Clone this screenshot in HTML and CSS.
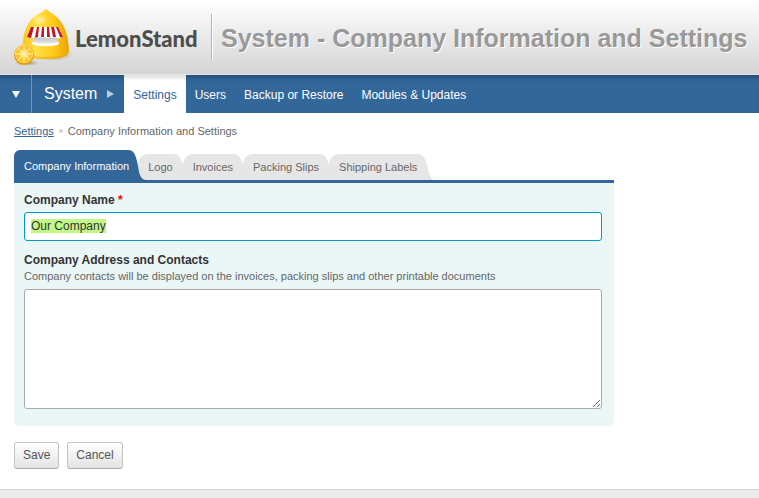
FILE: index.html
```html
<!DOCTYPE html>
<html lang="en">
<head>
<meta charset="utf-8">
<title>System - Company Information and Settings</title>
<link rel="stylesheet" href="styles.css">
</head>
<body>
<header class="header">
  <a class="brand" href="#">
    <svg class="brand-icon" viewBox="0 0 62 60" aria-hidden="true">
      <defs>
        <linearGradient id="lemon" x1="0" x2="1"><stop offset="0" stop-color="#fcc61a"/><stop offset=".3" stop-color="#ffe044"/><stop offset=".65" stop-color="#ffcb1b"/><stop offset="1" stop-color="#e9a304"/></linearGradient>
        <linearGradient id="window" x1="0" y1="0" x2="0" y2="1"><stop offset="0" stop-color="#b4b4b4"/><stop offset="1" stop-color="#f4f4f4"/></linearGradient>
        <radialGradient id="shade"><stop offset="0" stop-color="#8a7a3a" stop-opacity=".9"/><stop offset="1" stop-color="#a9a58a" stop-opacity="0"/></radialGradient>
        <radialGradient id="glow"><stop offset="0" stop-color="#fff6b8" stop-opacity=".8"/><stop offset="1" stop-color="#fff6b8" stop-opacity="0"/></radialGradient>
        <radialGradient id="slice"><stop offset="0" stop-color="#fff0a0"/><stop offset="1" stop-color="#ffb70f"/></radialGradient>
      </defs>
      <ellipse cx="40" cy="48" rx="22" ry="6" fill="url(#shade)"/>
      <ellipse cx="15" cy="56" rx="13" ry="3" fill="url(#shade)"/>
      <path d="M34 2c2 1 3 3 7 5 9 6 14 17 15 27 1 7 2 12-1 14-4 3-13 4-21 4s-17-1-21-4c-3-3-3-8-2-14C12 23 17 12 26 7c5-2 6-4 8-5z" fill="url(#lemon)"/>
      <ellipse cx="28" cy="13" rx="8" ry="6" fill="url(#glow)"/>
      <path d="M12 47c8 4 35 4 43 0-1 4-12 5-21 5s-20-1-22-5z" fill="#e9a000" opacity=".5"/>
      <path d="M21 28h25v8q1 2-1 2-11 2-23 0-2 0-1-2z" fill="url(#window)"/>
      <path d="M20 35c7 2 20 2 27 0v2c-7 3-20 3-27 0z" fill="#fff"/>
      <path d="M19 20h27l5 10q-2 2-4 1-2 1-4-1-2 2-5 0-2 2-5 0-2 2-5 0-2 2-5 0-2 2-4 1-2 1-4-1z" fill="#fff"/>
      <path d="M19 20h3l-3 11q-2 0-4-1zM25 20h2l-1 10q-2 1-3 0zM30 20h2v10h-3zM35 20h2l1 10h-3zM39 20h3l2 10h-3zM44 20h2l5 10q-2 1-3 0z" fill="#c41622"/>
      <circle cx="12" cy="48" r="10" fill="#eb9d08"/>
      <circle cx="12" cy="47" r="9" fill="#ffe87a"/>
      <circle cx="12" cy="47" r="8" fill="url(#slice)"/>
      <path d="M12 39v16M4 47h16M6 41l12 12M18 41L6 53" stroke="#fff2ae" stroke-width="1"/>
    </svg>
    <span class="brand-name">LemonStand</span>
  </a>
  <h1 class="page-title">System - Company Information and Settings</h1>
</header>
<nav class="nav">
  <button class="nav-toggle" type="button" aria-label="Menu"><svg viewBox="0 0 8 7" width="8" height="7"><path d="M0 0h8L4 7z" fill="#fff"/></svg></button>
  <a class="nav-section" href="#">System <svg viewBox="0 0 7 8" width="7" height="8"><path d="M0 0l7 4-7 4z" fill="#b9cce0"/></svg></a>
  <a class="nav-link nav-link-active" href="#">Settings</a>
  <a class="nav-link" href="#">Users</a>
  <a class="nav-link" href="#">Backup or Restore</a>
  <a class="nav-link" href="#">Modules &amp; Updates</a>
</nav>
<main class="content">
  <div class="crumbs"><a href="#">Settings</a><span class="dot"></span><span>Company Information and Settings</span></div>
  <form class="form">
    <div class="tabs">
      <a class="tab tab-active" href="#">Company Information<svg class="cap" viewBox="0 0 18 30"><path d="M0 0C6 0 7 4 9 11 11 20 11 30 18 30H0z"/></svg></a>
      <a class="tab" href="#">Logo<svg class="cap" viewBox="0 0 18 26"><path d="M0 0C6 0 8 4 10 11 12 19 13 26 18 26H0z"/></svg></a>
      <a class="tab" href="#">Invoices<svg class="cap" viewBox="0 0 18 26"><path d="M0 0C6 0 8 4 10 11 12 19 13 26 18 26H0z"/></svg></a>
      <a class="tab" href="#">Packing Slips<svg class="cap" viewBox="0 0 18 26"><path d="M0 0C6 0 8 4 10 11 12 19 13 26 18 26H0z"/></svg></a>
      <a class="tab" href="#">Shipping Labels<svg class="cap" viewBox="0 0 18 26"><path d="M0 0C6 0 8 4 10 11 12 19 13 26 18 26H0z"/></svg></a>
    </div>
    <div class="panel">
      <label class="label" for="name">Company Name <span class="required">*</span></label>
      <input class="field" id="name" type="text" value="Our Company">
      <label class="label label-next" for="address">Company Address and Contacts</label>
      <p class="hint" id="hint">Company contacts will be displayed on the invoices, packing slips and other printable documents</p>
      <textarea class="field area" id="address" aria-describedby="hint"></textarea>
    </div>
    <div class="actions">
      <button class="button" type="button">Save</button>
      <button class="button" type="button">Cancel</button>
    </div>
  </form>
</main>
<footer class="footer"></footer>
<script src="script.js"></script>
</body>
</html>
```
FILE: styles.css
```css
* { box-sizing: border-box; }

body {
  margin: 0;
  min-height: 100vh;
  display: flex;
  flex-direction: column;
  background: #fff;
  color: #666;
  font: 11px/14px "Liberation Sans", Arial, sans-serif;
}

a { color: inherit; text-decoration: none; }

.header {
  display: flex;
  align-items: center;
  height: 75px;
  padding-left: 12px;
  border-bottom: 1px solid #e6e6e6;
  background: linear-gradient(#fff, #d4d4d4);
}

.brand {
  display: flex;
  align-items: center;
  gap: 1px;
  width: 199px;
  flex: none;
}

.brand-icon { flex: none; width: 62px; height: 60px; }

.brand-name {
  padding-top: 3px;
  color: #4d4d4d;
  font: 900 22px/26px Lato, "Open Sans", sans-serif;
}

.page-title {
  margin: 0;
  padding: 2px 0 0 9px;
  border-left: 1px solid #b4b4b4;
  box-shadow: inset 1px 0 #fff;
  color: #999;
  font-size: 25px;
  line-height: 45px;
  white-space: nowrap;
  text-shadow: 1px 1px #fff;
}

.nav {
  display: flex;
  height: 38px;
  background: #336699;
  box-shadow: inset 0 6px 5px -4px #234a70;
  color: #fff;
  font-size: 12px;
  line-height: 40px;
}

.nav-toggle {
  width: 32px;
  padding: 0;
  border: 0;
  border-right: 1px solid #7094b8;
  background: none;
  line-height: 0;
}

.nav-section {
  display: flex;
  align-items: center;
  gap: 10px;
  padding: 0 10px 0 12px;
  font-size: 16px;
}

.nav-link { padding: 0 9px; }

.nav-link-active {
  background: linear-gradient(#ddd, #fff 6px);
  color: #336699;
}

.content { flex: 1; padding: 11px 14px 20px; }

.crumbs { display: flex; align-items: center; }
.crumbs a { color: #336699; text-decoration: underline; }

.dot {
  width: 4px;
  height: 4px;
  margin: 0 5px;
  border-radius: 2px;
  background: #d4d4d4;
}

.form { max-width: 600px; margin-top: 12px; }

.tabs {
  display: flex;
  align-items: flex-end;
  height: 33px;
  border-bottom: 3px solid #336699;
}

.tab {
  position: relative;
  z-index: 0;
  height: 26px;
  padding: 0 10px;
  border-radius: 10px 0 0 0;
  background: linear-gradient(#e6e6e6, #e6e6e6) no-repeat 0 0 / calc(100% - 10px) 100%;
  color: #666;
  line-height: 26px;
  white-space: nowrap;
}

.tab-active {
  z-index: 1;
  height: 30px;
  padding-right: 9px;
  border-radius: 6px 0 0 0;
  background-image: linear-gradient(#336699, #336699);
  color: #fff;
  line-height: 33px;
}

.cap {
  position: absolute;
  z-index: -1;
  top: 0;
  right: -8px;
  width: 18px;
  height: 100%;
  fill: #e6e6e6;
}

.tab-active .cap { fill: #336699; }

.panel {
  padding: 10px 12px 17px 10px;
  border-radius: 0 0 6px 6px;
  background: #ebf7f7;
}

.label {
  display: block;
  color: #333;
  font-size: 12px;
  font-weight: bold;
}

.label-next { margin-top: 12px; }
.required { color: #e00; }
.hint { margin: 2px 0 6px; }

.field {
  display: block;
  width: 100%;
  height: 29px;
  padding: 0 6px 2px;
  border: 1px solid #aaa;
  border-radius: 3px;
  outline: 0;
  background: #fff;
  color: #333;
  font: 12px/14px "Liberation Sans", Arial, sans-serif;
}

.label + .field { margin-top: 5px; }
.field:focus { border-color: #0099cc; }
.field::selection { background: #c2f787; color: #333; }

.area { height: 120px; padding: 6px; }

.actions { display: flex; gap: 8px; margin-top: 16px; }

.button {
  height: 27px;
  padding: 0 8px 2px;
  border: 1px solid #c4c4c4;
  border-bottom-color: #aaa;
  border-radius: 3px;
  background: linear-gradient(#fff, #e3e3e3);
  color: #555;
  font: 12px/14px "Liberation Sans", Arial, sans-serif;
}

.footer {
  height: 9px;
  border-top: 1px solid #d4d4d4;
  background: #ebebeb;
}
```
FILE: script.js
```js
const nameField = document.getElementById("name");
nameField.focus();
nameField.select();
```
